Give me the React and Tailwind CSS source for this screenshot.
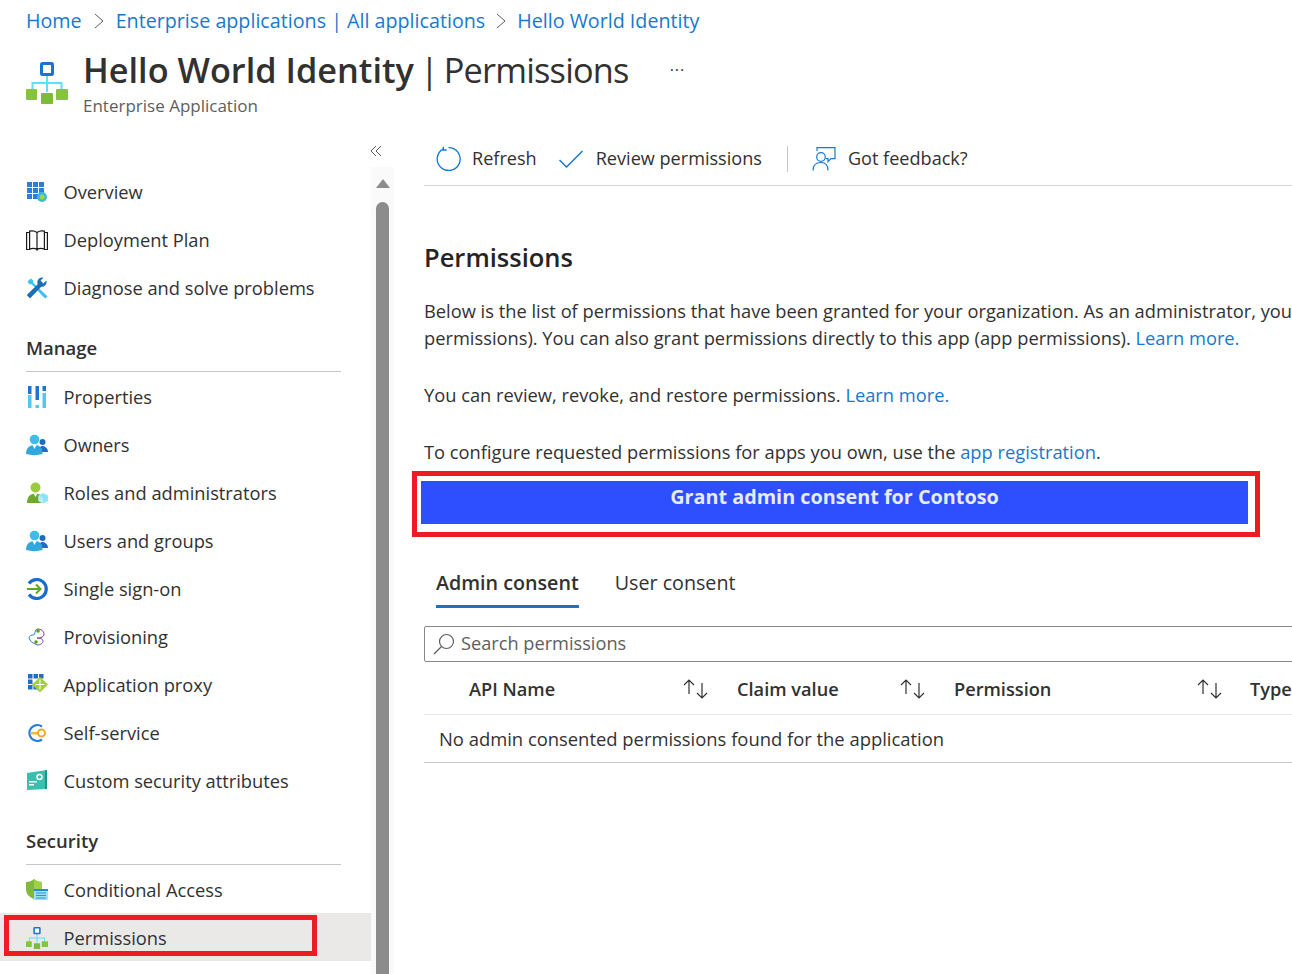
const FONT = "font-['Open_Sans','Liberation_Sans',sans-serif]";

function PermissionsIcon({ className }) {
    return (
        <svg viewBox="0 0 42 42" className={className}>
            <path d="M21 13v8M6.500 27v-6h29v6M21 21v9" fill="none" stroke="#5ee0fb" strokeWidth="2" />
            <rect x="15.500" y="1.500" width="11" height="11" fill="#fff" stroke="#1a73d0" strokeWidth="3" rx="1" />
            <rect x="0" y="27" width="11" height="11" rx="1" fill="#86c440" />
            <rect x="15" y="31" width="12" height="11" rx="1" fill="#7cba3a" />
            <rect x="30" y="27" width="12" height="11" rx="1" fill="#86c440" />
        </svg>
    );
}

const icon = "w-[22px] h-[22px] shrink-0";

function OverviewIcon() {
    return (
        <svg viewBox="0 0 22 22" className={icon}>
            <path d="M1 1h5v5H1zM7 1h5v5H7zM13 1h5v5h-5zM1 7h5v5H1zM7 7h5v5H7zM13 7h5v5h-5zM1 13h5v5H1zM7 13h5v5H7z" fill="#2a7fd9" />
            <circle cx="16" cy="16" r="5" fill="#3fb8d8" />
            <circle cx="16" cy="16" r="2.500" fill="#9fd34a" />
        </svg>
    );
}

function BookIcon() {
    return (
        <svg viewBox="0 0 22 22" className={icon} fill="none" stroke="#1b1a19" strokeWidth="1.200">
            <path d="M.6 3.500h3v17h-3zM21.400 3.500h-3v17h3zM3.600 20c3-1 5.500-.8 7.400.5V3.500C9 2 6.500 1.500 3.600 2.200zM18.400 20c-3-1-5.500-.8-7.400.5V3.500c2-1.500 4.500-2 7.400-1.300z" />
        </svg>
    );
}

function ToolsIcon() {
    return (
        <svg viewBox="0 0 22 22" className={icon}>
            <path d="M3 3 1.500 5 4 7.500l1.500-.5L17 19.500l2.500 2 2-2-2.500-2.500L7 5.500l.5-1.500L5 1.500z" fill="#3cc0f2" />
            <path d="M.8 18 12.500 6.500l3 3L4 21.500z" fill="#1c6fb5" />
            <path d="M12 8c-1.200-2.300-.8-4.500.6-6 1.300-1.300 3.200-1.800 5-1.400l-3 3 2.800 2.800 3-3c.5 1.800 0 3.700-1.400 5-1.500 1.400-3.800 1.800-5.700.5z" fill="#1c6fb5" />
        </svg>
    );
}

function PropertiesIcon() {
    return (
        <svg viewBox="0 0 22 22" className={icon}>
            <path d="M2 0h3.500v8H2zM9.500 0H13v14H9.500zM16.500 0H20v5h-3.500z" fill="#1d72d4" />
            <path d="M2 9h3.500v13H2zM9.500 19H13v3H9.500zM16.500 7H20v15h-3.500z" fill="#50c8f0" />
        </svg>
    );
}

function UsersIcon() {
    return (
        <svg viewBox="0 0 22 22" className={icon}>
            <circle cx="16.500" cy="8" r="3" fill="#1a6ccb" />
            <path d="M12 18c0-3.500 2-6 4.500-6s5.500 2.500 5.500 6z" fill="#1a6ccb" />
            <circle cx="8.500" cy="5.500" r="4.800" fill="#3dbde8" />
            <path d="M0 20c0-5.500 3-9 8.500-9s8 3.500 8 7v2c-5 1.500-11 1.500-16.500 0z" fill="#30a8dc" />
            <path d="M6.500 11h4l-2 4z" fill="#fff" />
        </svg>
    );
}

function RolesIcon() {
    return (
        <svg viewBox="0 0 22 22" className={icon}>
            <circle cx="9.500" cy="5.500" r="5" fill="#9bcb3c" />
            <path d="M1 21c0-6 3-9.500 8.500-9.500S18 15 18 21z" fill="#6ea92d" />
            <path d="M7.500 11.500h4L9.500 15z" fill="#fff" />
            <path d="M17 11l5 2.500v5.500l-5 2.500-4.500-2.500v-5.500z" fill="#8fe3f7" />
            <path d="M17 16v5.500l-4.500-2.500v-5.500z" fill="#b8eefa" />
        </svg>
    );
}

function SsoIcon() {
    return (
        <svg viewBox="0 0 22 22" className={icon}>
            <path d="M3 5.500A9.500 9.500 0 1 1 3 16.500" fill="none" stroke="#1a6ccb" strokeWidth="3.200" />
            <path d="M1 11h13M10 6.500l4.500 4.500-4.500 4.500" fill="none" stroke="#5ba823" strokeWidth="2" />
        </svg>
    );
}

function ProvisioningIcon() {
    return (
        <svg viewBox="0 0 22 22" className={icon} fill="none" strokeWidth="1">
            <path d="M11 3c4 0 7 2 7 5s-3 4-7 4" stroke="#7b3fa5" />
            <path d="M11 3C8 4 10 9 7 9c-3 0-5 2-3 5 1.500 3 4 3 7 5" stroke="#2a7fd9" />
            <path d="M11 19c4 0 6-2 6-4s-3-3-6-3" stroke="#7b3fa5" />
            <circle cx="12" cy="5" r="1.800" fill="#57a300" stroke="none" />
            <circle cx="10" cy="16" r="1.800" fill="#57a300" stroke="none" />
        </svg>
    );
}

function ProxyIcon() {
    return (
        <svg viewBox="0 0 22 22" className={icon}>
            <path d="M2 0h4.500v4.500H2zM7.500 0H12v4.500H7.500zM13 0h4.500v4.500H13zM2 5.500h4.500V10H2zM2 11h4.500v4.500H2zM7.500 11H12v4.500H7.500z" fill="#1d6fc4" />
            <path d="M14 3l8 7.500-8 8-8-8z" fill="#a5ce3e" />
            <path d="M14 5.500v10M9.500 10.500h9" stroke="#fff" strokeWidth="1" />
        </svg>
    );
}

function SelfServiceIcon() {
    return (
        <svg viewBox="0 0 22 22" className={icon}>
            <path d="M16 4.500A8 8 0 1 0 16 17.500" fill="none" stroke="#2a7fd9" strokeWidth="2.200" />
            <path d="M5 10h8v2.500H5z" fill="#f6b73c" />
            <circle cx="15.500" cy="11" r="3.500" fill="#fff" stroke="#f0a92e" strokeWidth="2" />
        </svg>
    );
}

function AttributesIcon() {
    return (
        <svg viewBox="0 0 22 22" className={icon}>
            <path d="M1 3 21 0v19L1 20z" fill="#39bfae" />
            <path d="M19 .3 21 0v19l-2 .2z" fill="#1c9488" />
            <path d="M3 11h8v1.500H3zM3 14h5v1.500H3z" fill="#fff" />
            <circle cx="13.500" cy="7" r="2.500" fill="none" stroke="#fff" strokeWidth="1.500" />
        </svg>
    );
}

function AccessIcon() {
    return (
        <svg viewBox="0 0 22 22" className={icon}>
            <path d="M0 3c3 0 6-1 8-3 2 2 5 3 8 3v7c0 5-3 8-8 10-5-2-8-5-8-10z" fill="#7fba3a" />
            <path d="M8 0c2 2 5 3 8 3v7H8z" fill="#a0d04a" />
            <path d="M8 10h14v11H8z" fill="#9fe2f8" />
            <path d="M8 10h14v2H8z" fill="#1e8fd5" />
            <path d="M10 14h10M10 16.500h10M10 19h10" stroke="#2a8fdc" strokeWidth="1" />
        </svg>
    );
}

function NavRow({ Icon, label }) {
    return (
        <div className="flex h-[48px] items-center gap-[15.500px] pl-[26px] text-[18.300px] text-[#323130]">
            <Icon />
            <span>{label}</span>
        </div>
    );
}

function NavHeading({ label }) {
    return (
        <div className="mx-[26px] mr-[30px] flex h-[48px] items-center border-b border-[#c8c6c4] text-[18.500px] font-semibold text-[#323130]">
            {label}
        </div>
    );
}

function SortArrows() {
    return (
        <svg viewBox="0 0 25 20" className="h-[20px] w-[25px] text-[#323130]" fill="none" stroke="currentColor" strokeWidth="1.200">
            <path d="M6 15V1M1 6l5-5 5 5M19 4v15M14 14l5 5 5-5" />
        </svg>
    );
}

function Link({ children }) {
    return <span className="text-[#1878cf]">{children}</span>;
}

export default function App() {
    return (
        <div className={`${FONT} flex h-[974px] w-[1292px] flex-col overflow-hidden bg-white text-[#323130]`}>
            {/* Header */}
            <div className="h-[140px] shrink-0 pl-[26px]">
                <div className="flex h-[42px] items-center whitespace-nowrap text-[19.700px] text-[#1878cf]">
                    <span>Home</span>
                    <svg viewBox="0 0 10 16" className="mx-[12px] h-[16px] w-[10px]" fill="none" stroke="#605e5c" strokeWidth="1">
                        <path d="M1 1l8 7-8 7" />
                    </svg>
                    <span>Enterprise applications | All applications</span>
                    <svg viewBox="0 0 10 16" className="mx-[11px] h-[16px] w-[10px]" fill="none" stroke="#605e5c" strokeWidth="1">
                        <path d="M1 1l8 7-8 7" />
                    </svg>
                    <span>Hello World Identity</span>
                </div>
                <div className="flex items-start gap-[15px] pt-[3px]">
                    <PermissionsIcon className="mt-[17px] h-[42px] w-[42px] shrink-0" />
                    <div>
                        <div className="flex items-center whitespace-nowrap text-[34.300px] leading-[48px] text-[#323130]">
                            <span className="font-semibold">Hello World Identity</span>
                            <span className="ml-[6px] font-normal">|</span>
                            <span className="ml-[5px] tracking-[-0.800px]">Permissions</span>
                            <span className="ml-[41px] pt-[1px] text-[16px] tracking-[1px]">···</span>
                        </div>
                        <div className="mt-[1px] text-[17px] leading-[22px] text-[#605e5c]">Enterprise Application</div>
                    </div>
                </div>
            </div>

            <div className="flex min-h-0 flex-1">
                {/* Sidebar */}
                <div className="w-[371px] shrink-0 whitespace-nowrap pt-[28px]">
                    <NavRow Icon={OverviewIcon} label="Overview" />
                    <NavRow Icon={BookIcon} label="Deployment Plan" />
                    <NavRow Icon={ToolsIcon} label="Diagnose and solve problems" />
                    <div className="h-[12px]" />
                    <NavHeading label="Manage" />
                    <div className="h-px" />
                    <NavRow Icon={PropertiesIcon} label="Properties" />
                    <NavRow Icon={UsersIcon} label="Owners" />
                    <NavRow Icon={RolesIcon} label="Roles and administrators" />
                    <NavRow Icon={UsersIcon} label="Users and groups" />
                    <NavRow Icon={SsoIcon} label="Single sign-on" />
                    <NavRow Icon={ProvisioningIcon} label="Provisioning" />
                    <NavRow Icon={ProxyIcon} label="Application proxy" />
                    <NavRow Icon={SelfServiceIcon} label="Self-service" />
                    <NavRow Icon={AttributesIcon} label="Custom security attributes" />
                    <div className="h-[12px]" />
                    <NavHeading label="Security" />
                    <div className="h-px" />
                    <NavRow Icon={AccessIcon} label="Conditional Access" />
                    <div className="relative mt-[-1px] h-[48px] bg-[#ebe9e8] pt-px">
                        <NavRow Icon={() => <PermissionsIcon className={icon} />} label="Permissions" />
                        <div className="absolute left-[4px] top-[2px] h-[41px] w-[313px] border-[5px] border-[#ed1c24]" />
                    </div>
                </div>

                {/* Scrollbar */}
                <div className="flex w-[23px] shrink-0 flex-col">
                    <div className="ml-[-1px] flex h-[27px] items-center pb-[5px]">
                        <svg viewBox="0 0 12 12" className="h-[12px] w-[12px]" fill="none" stroke="#605e5c" strokeWidth="1">
                            <path d="M6 1 1 6l5 5M11 1 6 6l5 5" />
                        </svg>
                    </div>
                    <div className="flex flex-1 flex-col bg-[#fafafa] px-[5px]">
                        <div className="flex h-[35px] items-center justify-center">
                            <div className="mt-[-2px] h-0 w-0 border-x-[7px] border-b-[9px] border-x-transparent border-b-[#8c8c8c]" />
                        </div>
                        <div className="flex-1 rounded-t-[7px] bg-[#8c8c8c]" />
                    </div>
                </div>

                {/* Main */}
                <div className="min-w-0 flex-1 overflow-hidden whitespace-nowrap pl-[30px]">
                    <div className="flex h-[46px] items-center border-b border-[#d6d6d6] pb-[8px] pl-[12px] text-[18.100px]">
                        <svg viewBox="0 0 24 24" className="h-[25px] w-[25px] shrink-0" fill="none" stroke="#1878cf" strokeWidth="1.300">
                            <path d="M7 2.800A11 11 0 1 0 12 1.500M7 .8v3h3.200" />
                        </svg>
                        <span className="ml-[11px]">Refresh</span>
                        <svg viewBox="0 0 24 18" className="ml-[22px] h-[18px] w-[24px] shrink-0" fill="none" stroke="#1878cf" strokeWidth="1.500">
                            <path d="M.5 10l7 7L23.500 1" />
                        </svg>
                        <span className="ml-[13px]">Review permissions</span>
                        <div className="ml-[25px] h-[26px] w-px bg-[#c8c6c4]" />
                        <svg viewBox="0 0 24 24" className="ml-[24px] h-[24px] w-[24px] shrink-0" fill="none" stroke="#1878cf" strokeWidth="1.200">
                            <path d="M5 4V.6h18v11h-4l-3 3v-3h-2" />
                            <circle cx="9" cy="10" r="4.300" />
                            <path d="M1 23.500c0-5 3-8 8-8s7 3 7 8" />
                        </svg>
                        <span className="ml-[12px]">Got feedback?</span>
                    </div>

                    <h1 className="mt-[55px] text-[25.500px] font-semibold leading-[32px] text-[#252423]">Permissions</h1>
                    <div className="mt-[24px] text-[18.300px] leading-[27px]">
                        Below is the list of permissions that have been granted for your organization. As an administrator, you
                        <br />
                        permissions). You can also grant permissions directly to this app (app permissions). <Link>Learn more.</Link>
                    </div>
                    <div className="mt-[30px] text-[18.300px] leading-[27px]">
                        You can review, revoke, and restore permissions. <Link>Learn more.</Link>
                    </div>
                    <div className="mt-[30px] text-[18.300px] leading-[27px]">
                        To configure requested permissions for apps you own, use the <Link>app registration</Link>.
                    </div>

                    {/* Grant consent, outlined */}
                    <div className="ml-[-12px] mt-[6px] h-[66px] w-[848px] border-[5px] border-[#ed1c24] pb-[8px] pl-[4px] pr-[7px] pt-[5px]">
                        <div className="h-[43px] bg-[#2d4fff] pt-[3px] text-center text-[19.800px] font-bold leading-[26px] text-[#e8ebff]">
                            Grant admin consent for Contoso
                        </div>
                    </div>

                    {/* Tabs */}
                    <div className="mt-[30px] flex items-start gap-[36px] pl-[12px] text-[19.700px] leading-[32px]">
                        <div className="border-b-[3px] border-[#1a73c8] pb-[6px] font-semibold">Admin consent</div>
                        <div>User consent</div>
                    </div>

                    <div className="mt-[18px] flex h-[36px] w-[900px] items-center gap-[6px] rounded-[2px] border border-[#8a8886] pl-[8px] text-[18.200px] text-[#605e5c]">
                        <svg viewBox="0 0 22 22" className="h-[22px] w-[22px] shrink-0" fill="none" stroke="#605e5c" strokeWidth="1.200">
                            <circle cx="13.500" cy="8.500" r="7" />
                            <path d="M8.500 13.500 1 21" />
                        </svg>
                        <span className="mt-[-1px]">Search permissions</span>
                    </div>

                    {/* Table */}
                    <div className="grid h-[53px] grid-cols-[313px_217px_296px_1fr] items-center border-b border-[#edebe9] pt-[3px] text-[18.200px] font-semibold">
                        <div className="flex items-center justify-between pl-[45px] pr-[29px]">API Name <SortArrows /></div>
                        <div className="flex items-center justify-between pr-[29px]">Claim value <SortArrows /></div>
                        <div className="flex items-center justify-between pr-[28px]">Permission <SortArrows /></div>
                        <div>Type</div>
                    </div>
                    <div className="flex h-[48px] items-center border-b border-[#c8c6c4] pl-[15px] text-[18.400px]">
                        No admin consented permissions found for the application
                    </div>
                </div>
            </div>
        </div>
    );
}
